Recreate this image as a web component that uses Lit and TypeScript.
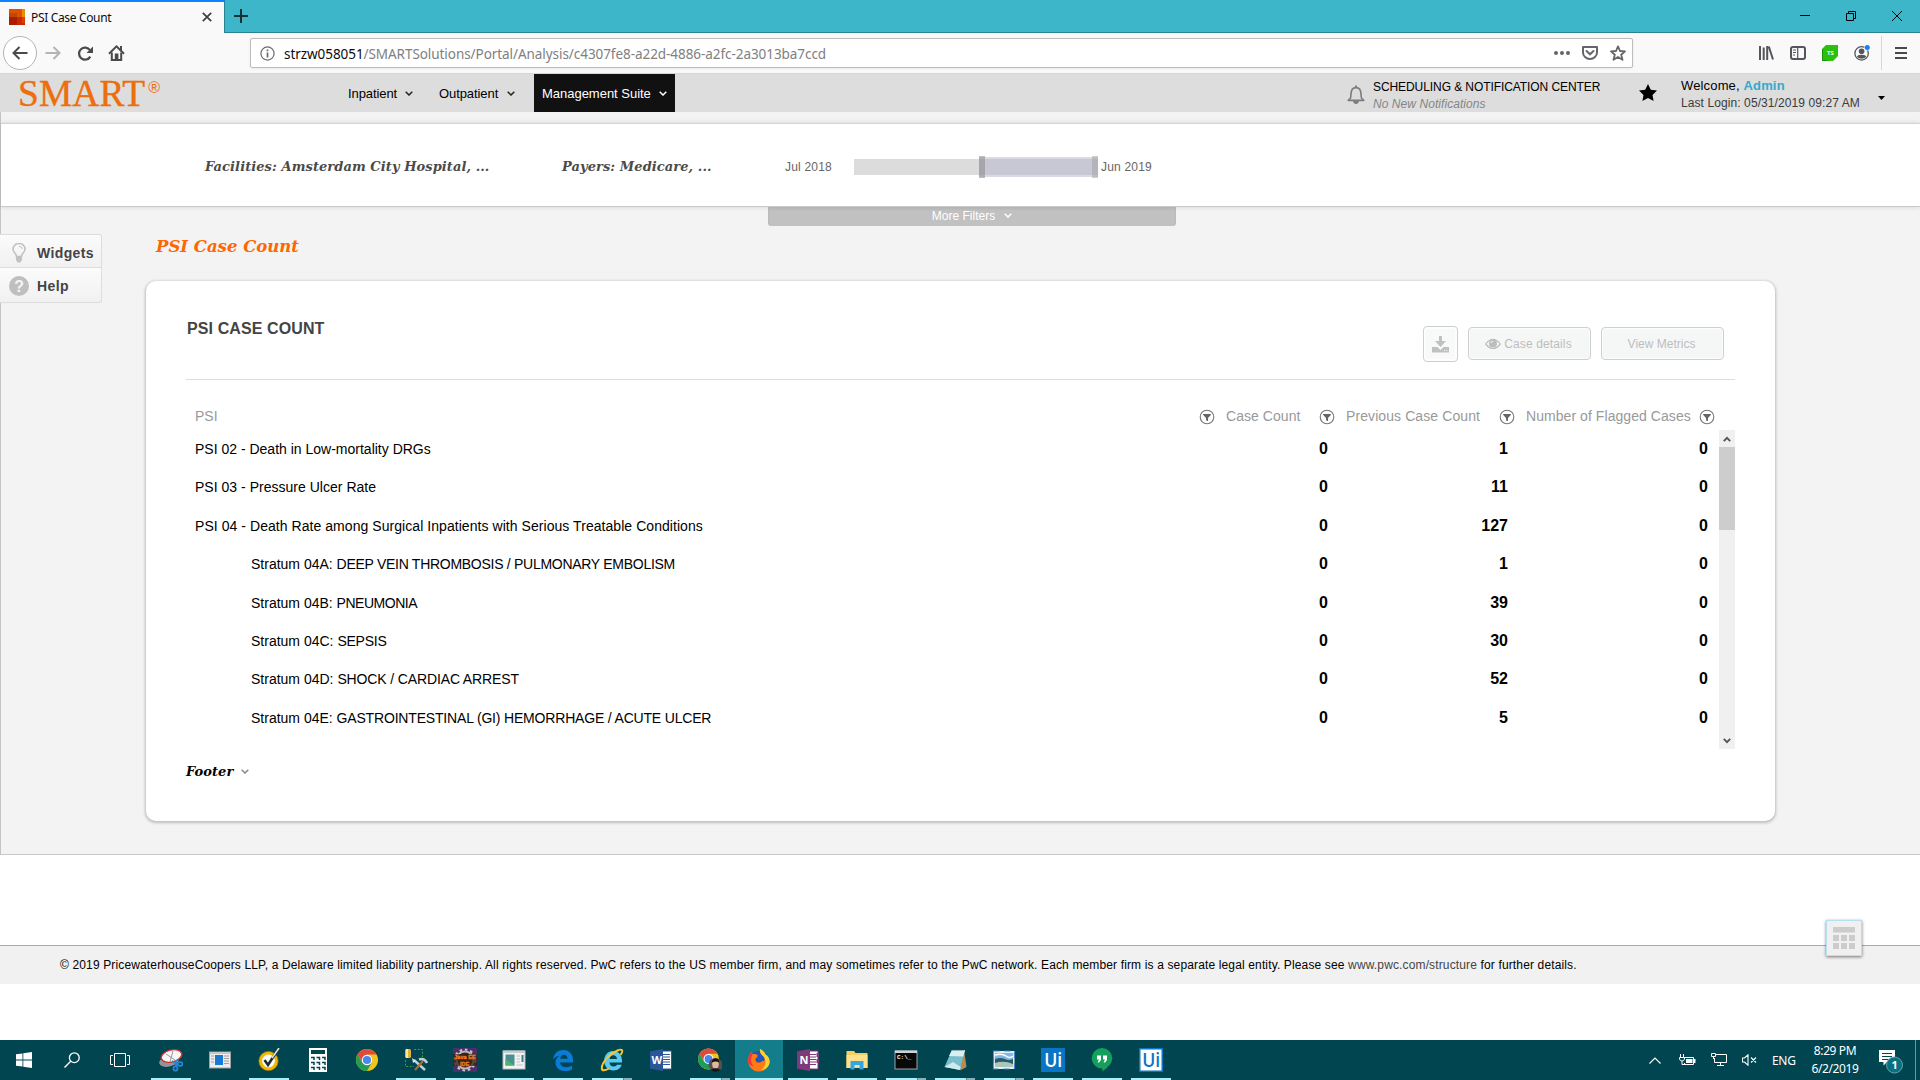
import { LitElement, html, css, svg } from "lit";
import { customElement } from "lit/decorators.js";
import { classMap } from "lit/directives/class-map.js";

const icon = (w: number, h: number, body: unknown) =>
  html`<svg class="ic" width=${w} height=${h} viewBox="0 0 ${w} ${h}">${body}</svg>`;

const chevron = (color: string, w = 8, h = 5) => html`<svg class="ic" width=${w} height=${h} viewBox="0 0 8 5"
  ><path d="M.7 .7L4 4L7.3 .7" fill="none" stroke=${color} stroke-width="1.5" /></svg>`;

/* ---------- browser chrome ---------- */
@customElement("browser-chrome")
class BrowserChrome extends LitElement {
  static styles = css`
    :host { display: block; font-family: "Noto Sans", "Open Sans", sans-serif; }
    .ic { display: block; flex: none; }
    .tabs { display: flex; height: 33px; background: #3cb6c8; box-shadow: inset 0 -1px #2b8390; }
    .tab { display: flex; align-items: center; box-sizing: border-box; width: 225px; height: 33px; padding: 0 12px 0 9px;
      background: #f9f9fa; border-top: 2px solid #0a84ff; border-right: 1px solid #2b8390; }
    .tab .label { margin-left: 6px; margin-top: -1px; flex: 1; font-size: 12px; letter-spacing: -0.34px; color: #0c0c0d; white-space: nowrap; }
    .tab .ic { margin-top: -2px; }
    .plus { margin: 9px 0 0 9px; }
    .win { display: flex; margin: 11px 18px 0 auto; gap: 36px; }
    .nav { display: flex; align-items: center; height: 40px; background: #f9f9fa; }
    .back { display: flex; align-items: center; justify-content: center; box-sizing: border-box; width: 34px; height: 34px;
      margin-left: 3px; border: 1px solid #b4b4b5; border-radius: 50%; background: #fff; }
    .fwd { margin-left: 8px; }
    .reload { margin-left: 17px; }
    .home { margin-left: 15px; }
    .url { display: flex; align-items: center; box-sizing: border-box; width: 1383px; height: 30px; margin-left: 125px;
      padding: 0 6px 0 9px; background: #fff; border: 1px solid #bcbcbd; border-radius: 2px; box-shadow: 0 1px 3px rgba(0,0,0,.06); }
    .addr { margin-left: 9px; margin-top: 2px; flex: 1; font-size: 13.5px; letter-spacing: -0.06px; color: #808080; white-space: nowrap; }
    .host { color: #0c0c0d; }
    .acts { display: flex; gap: 12px; align-items: center; }
    .tools { display: flex; align-items: center; margin-left: 125px; gap: 16px; }
    .sep { width: 1px; height: 34px; background: #d7d7db; margin-left: -5px; margin-right: -3px; }
    .ts { font: bold 6px "Noto Sans", sans-serif; }
  `;
  render() {
    return html`
      <div class="tabs">
        <div class="tab">
          ${icon(16, 16, svg`<rect width="16" height="16" fill="#c52a00"/><rect width="13" height="8" fill="#dc5204"/><rect x="13" width="3" height="8" fill="#eb8c00"/><rect y="4" width="8" height="4" fill="#c34600"/><rect y="8" width="8" height="8" fill="#a91d00"/><rect x="13" y="8" width="3" height="6" fill="#da3c00"/>`)}
          <span class="label">PSI Case Count</span>
          ${icon(10, 10, svg`<path d="M.8 .8L9.2 9.2M9.2 .8L.8 9.2" stroke="#3f3f43" stroke-width="1.7"/>`)}
        </div>
        <div class="plus">${icon(14, 14, svg`<path d="M7 0V14M0 7H14" stroke="#163036" stroke-width="2"/>`)}</div>
        <div class="win">
          ${icon(10, 10, svg`<path d="M0 4.5H10" stroke="#000"/>`)}
          ${icon(10, 10, svg`<path d="M.5 2.5H7.5V9.5H.5ZM2.5 2.5V.5H9.5V7.5H7.5" fill="none" stroke="#000"/>`)}
          ${icon(10, 10, svg`<path d="M0 0L10 10M10 0L0 10" stroke="#000"/>`)}
        </div>
      </div>
      <div class="nav">
        <div class="back">${icon(16, 14, svg`<path d="M15.5 7H1.5M7.5 1L1.5 7L7.5 13" fill="none" stroke="#4a4a4d" stroke-width="2"/>`)}</div>
        <div class="fwd">${icon(16, 14, svg`<path d="M.5 7H14.5M8.5 1L14.5 7L8.5 13" fill="none" stroke="#b4b4b6" stroke-width="2"/>`)}</div>
        <div class="reload">${icon(15, 15, svg`<path d="M12.3 10.6A6 6 0 1 1 12 4.2" fill="none" stroke="#4a4a4d" stroke-width="2.2"/><path d="M15 .5V7H8.5Z" fill="#4a4a4d"/>`)}</div>
        <div class="home">${icon(17, 16, svg`<path d="M1 8.8L8.5 1.4L16 8.8" fill="none" stroke="#4a4a4d" stroke-width="2"/><path d="M3.8 7.500V15H13.2V7.500" fill="none" stroke="#4a4a4d" stroke-width="2"/><rect x="6.800" y="8.500" width="3.600" height="7.500" fill="#4a4a4d"/><rect x="12" y="1" width="2" height="4" fill="#4a4a4d"/>`)}</div>
        <div class="url">
          ${icon(15, 15, svg`<circle cx="7.5" cy="7.5" r="6.6" fill="none" stroke="#6b6b6e" stroke-width="1.2"/><path d="M7.5 6.4V11.4M7.5 3.4V5.2" stroke="#6b6b6e" stroke-width="1.7"/>`)}
          <span class="addr"><span class="host">strzw058051</span>/SMARTSolutions/Portal/Analysis/c4307fe8-a22d-4886-a2fc-2a3013ba7ccd</span>
          <div class="acts">
            ${icon(16, 16, svg`<g fill="#66666a"><circle cx="2" cy="8" r="2"/><circle cx="8" cy="8" r="2"/><circle cx="14" cy="8" r="2"/></g>`)}
            ${icon(16, 16, svg`<path d="M1 2H15V7.5A7 6.5 0 0 1 1 7.5Z" fill="none" stroke="#66666a" stroke-width="2" stroke-linejoin="round"/><path d="M4.5 6L8 9.3L11.5 6" fill="none" stroke="#66666a" stroke-width="2" stroke-linecap="round"/>`)}
            ${icon(16, 16, svg`<path d="M8 1.4L10 6L15 6.4L11.2 9.7L12.5 14.8L8 12L3.5 14.8L4.8 9.7L1 6.4L6 6Z" fill="none" stroke="#66666a" stroke-width="1.8" stroke-linejoin="round"/>`)}
          </div>
        </div>
        <div class="tools">
          ${icon(16, 16, svg`<path d="M2 1V15M5.7 2.5V15M9.2 1V15M10.8 1.5L15 14.5" fill="none" stroke="#56565a" stroke-width="2"/>`)}
          ${icon(16, 16, svg`<rect x="1" y="2" width="14" height="12" rx="2" fill="none" stroke="#56565a" stroke-width="2"/><path d="M7.7 2V14M3 5H6M3 7.5H6M3 10H5" stroke="#56565a" stroke-width="1.2"/>`)}
          ${icon(16, 16, svg`<path d="M4 0H16V11L11 16H0V4Z" fill="#2bc00b"/><path d="M.5 4V15.5H5" fill="none" stroke="#18910a"/><text class="ts" x="5" y="10.2" fill="#e9ffe4">TS</text>`)}
          ${icon(16, 16, svg`<circle cx="7.6" cy="8.4" r="6.7" fill="none" stroke="#56565a" stroke-width="1.3"/><circle cx="7.6" cy="6.3" r="2.8" fill="#56565a"/><path d="M3 12Q3.5 9.5 7.6 9.7Q11.7 9.5 12.2 12Q7.6 15.5 3 12Z" fill="#56565a"/><circle cx="13.3" cy="2.6" r="3" fill="#f9f9fa"/><circle cx="13.3" cy="2.5" r="2.5" fill="#0a84ff"/>`)}
          <div class="sep"></div>
          ${icon(12, 14, svg`<path d="M0 2H12M0 7H12M0 12H12" stroke="#4a4a4d" stroke-width="2"/>`)}
        </div>
      </div>`;
  }
}

/* ---------- portal header ---------- */
@customElement("portal-header")
class PortalHeader extends LitElement {
  static styles = css`
    :host { display: flex; height: 39px; background: #ddd; color: #000; font-family: "Liberation Sans", Arial, sans-serif; white-space: nowrap; box-shadow: inset 0 1px #d6d6d6; }
    .ic { display: block; flex: none; }
    .logo { display: flex; width: 317px; padding-left: 18px; color: #eb6f0d; -webkit-text-stroke: .4px #eb6f0d; font: 37.4px/41px "Liberation Serif", "Times New Roman", serif; letter-spacing: .15px; }
    .reg { font: 16px/29px "Liberation Sans", Arial, sans-serif; margin-left: 3px; -webkit-text-stroke: 0; }
    .menu { display: flex; align-items: center; box-sizing: border-box; gap: 8px; height: 38px; margin-top: 1px; padding-left: 8px; font-size: 13px; letter-spacing: -0.08px; }
    .m1 { width: 91px; margin-left: 5px; padding-left: 8px; }
    .m2 { width: 103px; }
    .m2 .ic { margin-left: 1px; }
    .m3 { width: 141px; background: #111; color: #fff; letter-spacing: -0.02px; }
    .bell { margin: 12px 0 0 672px; }
    .note { width: 266px; padding: 6px 0 0 8px; font-size: 12px; line-height: 17px; letter-spacing: -0.08px; }
    .sub { font-style: italic; color: #858585; letter-spacing: 0.06px; }
    .star { padding-top: 11px; width: 42px; }
    .who { font-size: 13px; line-height: 17px; padding-top: 4px; width: 197px; letter-spacing: .15px; }
    .name { font-weight: bold; color: #35a9cc; }
    .last { font-size: 12px; color: #3b3b3b; letter-spacing: 0.09px; margin-top: 1px; }
    .caret { padding-top: 23px; }
  `;
  render() {
    return html`
      <div class="logo">SMART<span class="reg">®</span></div>
      <div class="menu m1">Inpatient ${chevron("#222")}</div>
      <div class="menu m2">Outpatient ${chevron("#222")}</div>
      <div class="menu m3">Management Suite ${chevron("#fff")}</div>
      <div class="bell">${icon(18, 20, svg`<path d="M3.6 13C4.3 8 3.5 2.6 9 2.6S13.7 8 14.4 13L16.8 15.4H1.2Z" fill="none" stroke="#7d7d7d" stroke-width="1.6" stroke-linejoin="round"/><path d="M9 .5V2.5" stroke="#7d7d7d" stroke-width="2"/><path d="M6 16H12Q11.5 19 9 19T6 16" fill="#7d7d7d"/>`)}</div>
      <div class="note"><div>SCHEDULING &amp; NOTIFICATION CENTER</div><div class="sub">No New Notifications</div></div>
      <div class="star">${icon(18, 17, svg`<path d="M9 0L11.8 5.7L18 6.5L13.5 10.9L14.6 17L9 14L3.4 17L4.5 10.9L0 6.5L6.2 5.7Z" fill="#000"/>`)}</div>
      <div class="who"><div>Welcome, <span class="name">Admin</span></div><div class="last">Last Login: 05/31/2019 09:27 AM</div></div>
      <div class="caret">${icon(7, 4, svg`<path d="M0 0H7L3.5 4Z" fill="#000"/>`)}</div>`;
  }
}

/* ---------- filter bar ---------- */
@customElement("filter-bar")
class FilterBar extends LitElement {
  static styles = css`
    :host { display: block; font-family: "Liberation Sans", Arial, sans-serif; white-space: nowrap; }
    .ic { display: block; }
    .bar { display: flex; align-items: center; box-sizing: border-box; height: 84px; padding: 3px 0 0 204px; background: #fff;
      border-top: 1px solid #d3d3d3; border-bottom: 1px solid #c9c9c9; box-shadow: 0 0 5px rgba(0,0,0,.13); }
    .f { font: italic bold 13px "DejaVu Serif", serif; color: #4a4a4a; letter-spacing: 0.08px; margin-top: -1px; }
    .f1 { width: 357px; }
    .f2 { width: 223px; }
    .d { font-size: 12px; color: #666; letter-spacing: 0.2px; }
    .d1 { width: 69px; }
    .track { position: relative; width: 244px; height: 16px; background: #dcdcdc; margin-right: 3px; }
    .sel { position: absolute; left: 125px; top: -2px; width: 119px; height: 20px; background: rgba(176,176,204,.45); }
    .h { position: absolute; top: -3px; width: 6px; height: 22px; background: rgba(130,130,130,.5); }
    .h1 { left: 125px; } .h2 { left: 238px; background: rgba(160,160,160,.5); }
    .more { display: flex; align-items: center; justify-content: center; gap: 9px; box-sizing: border-box; width: 408px; height: 19px; padding-bottom: 2px; margin-left: 767px; background: #c1c1c1;
      border-radius: 0 0 3px 3px; color: #fff; font-size: 12px; letter-spacing: 0.02px; box-shadow: inset 0 2px 3px rgba(0,0,0,.08); }
  `;
  render() {
    return html`
      <div class="bar">
        <div class="f f1">Facilities: Amsterdam City Hospital, ...</div>
        <div class="f f2">Payers: Medicare, ...</div>
        <div class="d d1">Jul 2018</div>
        <div class="track"><div class="sel"></div><div class="h h1"></div><div class="h h2"></div></div>
        <div class="d">Jun 2019</div>
      </div>
      <div class="more">More Filters ${chevron("#fff")}</div>`;
  }
}

/* ---------- case count card ---------- */
/* The last field is the tracking, in pixels, of the label (of a stratum's name, in nested rows). */
type Row = [code: string, name: string, nested: boolean, values: number[], tracking: number];
const ROWS: Row[] = [
  ["", "PSI 02 - Death in Low-mortality DRGs", false, [0, 1, 0], 0],
  ["", "PSI 03 - Pressure Ulcer Rate", false, [0, 11, 0], 0.02],
  ["", "PSI 04 - Death Rate among Surgical Inpatients with Serious Treatable Conditions", false, [0, 127, 0], 0.055],
  ["Stratum 04A: ", "DEEP VEIN THROMBOSIS / PULMONARY EMBOLISM", true, [0, 1, 0], -0.28],
  ["Stratum 04B: ", "PNEUMONIA", true, [0, 39, 0], -0.48],
  ["Stratum 04C: ", "SEPSIS", true, [0, 30, 0], -0.22],
  ["Stratum 04D: ", "SHOCK / CARDIAC ARREST", true, [0, 52, 0], -0.13],
  ["Stratum 04E: ", "GASTROINTESTINAL (GI) HEMORRHAGE / ACUTE ULCER", true, [0, 5, 0], -0.18],
];

@customElement("case-card")
class CaseCard extends LitElement {
  static styles = css`
    :host { display: block; box-sizing: border-box; width: 1629px; height: 540px; padding: 0 40px; background: #fff; border-radius: 10px;
      box-shadow: 0 1px 3px 1px rgba(0,0,0,.22); font-family: "Liberation Sans", Arial, sans-serif; white-space: nowrap; color: #000; }
    .ic { display: block; flex: none; }
    .head { display: flex; box-sizing: border-box; height: 99px; border-bottom: 1px solid #ddd; }
    .title { flex: 1; padding: 38px 0 0 1px; font-size: 16px; line-height: 20px; font-weight: bold; color: #444; letter-spacing: 0.1px; }
    .btn { display: flex; align-items: center; justify-content: center; gap: 3px; box-sizing: border-box; width: 123px; height: 33px; margin: 46px 10px 0 0; padding-right: 2px;
      background: #f5f7f6; border: 1px solid #ccd0cf; border-radius: 4px; color: #bdbdbd; font-size: 12px; box-shadow: inset 0 0 0 1px #fbfcfc; letter-spacing: .13px; }
    .dl { width: 35px; height: 36px; margin-top: 45px; padding-right: 0; background: #f8f9f9; box-shadow: inset 0 0 0 2px #fdfdfd; }
    .last { margin-right: 11px; letter-spacing: 0; }
    .cols { display: flex; align-items: center; height: 50px; padding: 22px 0 0 9px; box-sizing: border-box; font-size: 14px; color: #999; }
    .cols .ic { margin-top: 2px; }
    .c0 { width: 1004px; } .c1 { width: 93px; margin-left: 11px; letter-spacing: .05px; } .c2 { width: 153px; margin-left: 11px; letter-spacing: .09px; } .c3 { width: 173px; margin-left: 11px; letter-spacing: .06px; }
    .body { display: flex; height: 319px; }
    .rows { flex: 1; }
    .row { display: grid; grid-template-columns: 942px 200px 180px 200px; height: 38.4px; line-height: 38.4px; font-size: 14px; }
    .lab { padding-left: 9px; white-space: pre; }
    .nested { padding-left: 65px; }
    .v { text-align: right; font-size: 16px; font-weight: bold; }
    .sb { display: flex; flex-direction: column; align-items: center; width: 16px; background: #f0f0f0; }
    .a { display: flex; align-items: center; height: 17px; }
    .thumb { width: 16px; height: 83px; background: #cdcdcd; margin-bottom: auto; }
    .foot { display: flex; align-items: center; gap: 8px; margin-top: 12px; height: 20px; font: italic bold 13px "DejaVu Serif", serif; letter-spacing: 0.05px; }
  `;
  filter = () => icon(16, 16, svg`<circle cx="8" cy="8" r="6.8" fill="none" stroke="#777" stroke-width="1.1"/><path d="M4.2 5H11.8V6L9 9V12.2L7 11.2V9L4.2 6Z" fill="#666"/>`);
  render() {
    return html`
      <div class="head">
        <div class="title">PSI CASE COUNT</div>
        <div class="btn dl">${icon(17, 17, svg`<path d="M7 0H10V5H14L8.5 11L3 5H7Z" fill="#c0c0c0"/><path d="M0 11H5.5L8.5 14L11.5 11H17V16.5H0Z" fill="#c0c0c0"/><path d="M12 14.3H13M14.3 14.3H15.3" stroke="#fff"/>`)}</div>
        <div class="btn">${icon(16, 12, svg`<path d="M.6 6Q8-3.4 15.4 6Q8 15 .6 6Z" fill="none" stroke="#bdbdbd" stroke-width="1.2"/><circle cx="8" cy="5.5" r="4" fill="#bdbdbd"/><path d="M6 5Q6.3 3.4 8 3.2" fill="none" stroke="#f5f7f6"/>`)}<span>Case details</span></div>
        <div class="btn last">View Metrics</div>
      </div>
      <div class="cols">
        <span class="c0">PSI</span>${this.filter()}
        <span class="c1">Case Count</span>
        ${this.filter()}
        <span class="c2">Previous Case Count</span>
        ${this.filter()}
        <span class="c3">Number of Flagged Cases</span>${this.filter()}
      </div>
      <div class="body">
        <div class="rows">
          ${ROWS.map(([code, name, nested, values, tracking]) => html`<div class="row">
            <span class=${classMap({ lab: true, nested })}>${code}<span style="letter-spacing:${tracking}px">${name}</span></span>${values.map((v) => html`<span class="v">${v}</span>`)}
          </div>`)}
        </div>
        <div class="sb">
          <div class="a">${icon(8, 6, svg`<path d="M.8 5.2L4 1.8L7.2 5.2" fill="none" stroke="#555" stroke-width="1.9"/>`)}</div>
          <div class="thumb"></div>
          <div class="a">${icon(8, 6, svg`<path d="M.8 .8L4 4.2L7.2 .8" fill="none" stroke="#555" stroke-width="1.9"/>`)}</div>
        </div>
      </div>
      <div class="foot">Footer ${chevron("#888")}</div>`;
  }
}

/* ---------- taskbar ---------- */
const chromeMark = (r = 11) => svg`<g transform="translate(12 12) scale(${r / 11})"><circle r="11" fill="#f2c31b"/><path d="M-9.5-5.5A11 11 0 0 1 9.5-5.5H0L-4.5 2.6Z" fill="#dd4b3e"/><path d="M-9.5-5.5A11 11 0 0 0 0 11L4.7 2.7L-4.7 2.7Z" fill="#1f9d58"/><circle r="5.2" fill="#fff"/><circle r="4.1" fill="#4a86ee"/></g>`;

type Task = { art: unknown; open?: boolean; group?: boolean; active?: boolean };
const TASKS: Task[] = [
  { open: true, art: svg`<ellipse cx="10" cy="13" rx="10" ry="5.5" transform="rotate(-14 10 13)" fill="#8d9699"/><ellipse cx="12.5" cy="8" rx="10.5" ry="6" transform="rotate(-14 12.5 8)" fill="#f7f7f7" stroke="#d22f2f" stroke-width="1.4"/><path d="M7 6L16 12M14 3L11 14" stroke="#999" stroke-width="1"/><g fill="none" stroke="#2387d4" stroke-width="1.8"><ellipse cx="21" cy="16" rx="2.4" ry="1.800"/><ellipse cx="16.500" cy="20.500" rx="2" ry="2.200"/><path d="M13 13L19 17M17 12L17 19"/></g>` },
  { art: svg`<rect x="1.5" y="4" width="21" height="16" fill="#ececec" stroke="#9aa3a5" stroke-width="1"/><rect x="7" y="7" width="8" height="10" fill="#1979d6"/><path d="M3 8H6M3 11H6M3 14H6M16 8H21M16 10.5H21M16 13H21M16 15.5H21" stroke="#9d9d9d"/><rect x="2" y="4" width="20" height="2" fill="#c4c8c9"/>` },
  { open: true, art: svg`<circle cx="11.5" cy="13" r="8" fill="#f9fafa" stroke="#f2b705" stroke-width="3.2"/><circle cx="11.5" cy="13" r="9.7" fill="none" stroke="#a97d00" stroke-width=".6"/><path d="M7.5 12L11 17L21 1.5" fill="none" stroke="#1f2a2c" stroke-width="2.6"/><path d="M15 10L22 0" stroke="#dfe6e8" stroke-width="1.6"/>` },
  { art: svg`<rect x="3" width="18" height="24" fill="#fff"/><rect x="5" y="2" width="14" height="4" fill="#00454f"/><path d="M5 9.500H8V12M10.500 9.500H13.500V12M16 9.500H19V12M5 14.500H8V17M10.500 14.500H13.500V17M16 14.500H19V17M5 19.500H8V22M10.500 19.500H13.500V22M16 19.500H19V22" fill="none" stroke="#00454f" stroke-width="1.500"/>` },
  { art: chromeMark() },
  { open: true, art: svg`<path d="M10 1.500H18.500V9M1.500 12V18.500H10" fill="none" stroke="#3aa23a" stroke-width="1" stroke-dasharray="2 1.6"/><rect x="1" y="1" width="6" height="9" rx="1.5" fill="#e2b33a"/><rect x="2" y="1" width="2" height="9" fill="#fbe9a4"/><path d="M10 12L21 22" stroke="#bcd0dd" stroke-width="2.4"/><path d="M19 13L11 22" stroke="#a47034" stroke-width="2.2"/><path d="M15 11.500Q20 9.500 23 15" fill="none" stroke="#c3cfd6" stroke-width="2.600"/><path d="M8 10L12 13L9 15Z" fill="#d9e5ee"/>` },
  { open: true, art: svg`<rect width="24" height="24" fill="#4b2f6b"/><circle cx="12" cy="12" r="8.500" fill="#3a2420" stroke="#b9b9b9" stroke-width="2"/><circle cx="12" cy="12" r="10.400" fill="none" stroke="#c9c9c9" stroke-width="2" stroke-dasharray="2.600 2.800"/><rect y="6" width="24" height="12" fill="#3b2113" opacity=".75"/><text x="1.200" y="11.400" class="jv">Java EE</text><text x="7" y="17.600" class="jv">IDE</text>` },
  { open: true, art: svg`<rect x="1" y="3" width="22" height="18" fill="#f1f2f2" stroke="#b8bcbd"/><rect x="1" y="2.500" width="22" height="2.500" fill="#c8cccd"/><rect x="3.500" y="6.500" width="9" height="11" fill="#4c8f93"/><path d="M3.500 17.500V11L12.500 17.500" fill="#4fb26d"/><path d="M14.500 8H18M14.500 11H18M14.500 14H18M14.500 17H21" stroke="#c2c2c2"/><rect x="19.500" y="7" width="2" height="7" fill="#3d7f88"/>` },
  { open: true, art: svg`<path d="M2 11.500C3 5 7 2 12.500 2C18.500 2 22 6.500 22 12V14.500H9C9.300 17.500 12 19.200 15 19.200C17.300 19.200 19.300 18.600 21 17.600V21.500C19 22.700 16.500 23 14 23C8.500 23 4.500 19.500 4.500 14.500C4.500 11.500 6 9 8.500 7.700C5.500 8 3.500 9.500 2 11.500ZM9.200 10.800H16.500C16.500 8.500 15.200 6.800 13 6.800C10.800 6.800 9.500 8.700 9.200 10.800Z" fill="#0a7bd8"/>` },
  { open: true, group: true, art: svg`<path fill-rule="evenodd" d="M13 3C18.500 3 22 7 22 12.800V14.500H9.500C9.800 17 11.200 18.500 13.500 18.500C15.500 18.500 16.600 17.600 17 16.800H21.700C20.500 20.500 17.500 22.500 13.300 22.500C8 22.500 4.200 18.500 4.200 12.800S8 3 13 3ZM9.600 10.900H17C16.700 8.600 15.500 7.300 13.300 7.300S9.900 8.600 9.600 10.900Z" fill="#5cc9f3"/><path d="M20.500 7C24 2 22 .5 17.500 2.500C10 5.500 2 14 1.800 20C1.700 23 4.500 23 9 20.500" fill="none" stroke="#f6c72b" stroke-width="2"/>` },
  { art: svg`<rect x="12" y="3" width="10.500" height="18" fill="#fff" stroke="#2b579a"/><path d="M14 6.500H21M14 9H21M14 11.500H21M14 14H21M14 16.500H21" stroke="#2b579a" stroke-width="1.100"/><path d="M1 3.200L14 1V23L1 20.800Z" fill="#2b579a"/><text x="2.600" y="16" class="of">W</text>` },
  { open: true, group: true, art: svg`<g transform="translate(-1.500 -1)">${chromeMark(10.500)}</g><circle cx="17.500" cy="17" r="7" fill="#55504e"/><ellipse cx="17.500" cy="16.200" rx="3.300" ry="4.200" fill="#e3b79c"/><path d="M13.800 14.500Q14 10.500 17.500 10.500T21.200 14.500Q18 12.500 13.800 14.500Z" fill="#15110f"/><path d="M12.500 22Q17.500 18.500 22.500 22Q17.500 26 12.500 22Z" fill="#181818"/>` },
  { open: true, active: true, art: svg`<circle cx="12" cy="13" r="10" fill="#2257b8"/><path d="M13 1C17 3 18 5 18.500 6.500C21.500 8 23 11.500 22.500 15A10.800 10.800 0 0 1 1.200 14C1 10 2 6 4.500 3.500C4.500 5 5 5.500 6 6C7.500 5.700 9.500 6 10.500 7C11 8.500 10 9.500 8.500 10.500C8 13.500 10 14.500 12 14.500C15 14.500 14 12.500 17 13C18.500 11 17 8 14.500 6C13 4.500 12.700 3 13 1Z" fill="#ff7a14"/><path d="M13 1C17 3 18 5 18.500 6.500C21.500 8 23 11.500 22.500 15C21.500 19.500 17.500 22 14 22C19 19 20 12 16 8C13.500 6 12.500 3.500 13 1Z" fill="#ffd22e"/><path d="M1.200 14C1 10 2 6 4.500 3.500C4.500 5 5 5.500 6 6C3.500 9 3.500 15 6.500 18.500C4 18 2 16.500 1.200 14Z" fill="#f5333f"/>` },
  { open: true, art: svg`<rect x="12" y="3" width="10" height="18" fill="#fff" stroke="#80397b"/><path d="M14 6.500H20M14 9H20M14 11.500H20M14 14H20M14 16.500H20" stroke="#80397b" stroke-width="1.100"/><path d="M20.500 5H23V9H20.500M20.500 11H23V15H20.500" fill="#80397b"/><path d="M1 3.200L14 1V23L1 20.800Z" fill="#80397b"/><text x="3.500" y="16.200" class="of">N</text>` },
  { open: true, art: svg`<path d="M1.500 3H9L10.500 5H22.500V20H1.500Z" fill="#f6cf62"/><rect x="1.500" y="7" width="21" height="13" fill="#fde08a"/><path d="M5.500 21.500V13H18.500V21.500H14.500V17H9.500V21.500Z" fill="#35a6e4"/>` },
  { open: true, group: true, art: svg`<rect x="1" y="3" width="22" height="18" fill="#080808" stroke="#9ba5a8"/><rect x="1" y="2.500" width="22" height="2.500" fill="#cdd3d5"/><text x="3" y="11" class="cmd">C:\\_</text>` },
  { open: true, group: true, art: svg`<path d="M21 2L23.500 19L17 22.500Z" fill="#b98b52"/><path d="M9 2H22L17 22L1.500 19Z" fill="#79bfcb"/><path d="M9 2H22L20.300 8.500L6 8Z" fill="#d7f0f3"/><path d="M1.500 19L17 22L17.800 19L10 14Z" fill="#cdeaee"/><path d="M9.500 2.300H21.500" stroke="#5d6b6e" stroke-width="1.300" stroke-dasharray="1 1"/>` },
  { open: true, group: true, art: svg`<rect x="1.500" y="3" width="21" height="18" fill="#e9eef2" stroke="#3f86cf" stroke-width="1.200" stroke-dasharray="6 5"/><rect x="3" y="5" width="18" height="14" fill="#7db9e8"/><path d="M3 11Q9 9 13 11T21 11V19H3Z" fill="#2e5966"/><path d="M3 15Q12 12 21 16V19H3Z" fill="#a9c9b9"/><path d="M3 7Q10 5 14 8T21 8" fill="none" stroke="#fff" stroke-width="1.500"/>` },
  { open: true, art: svg`<rect width="24" height="24" fill="#0975c4"/><text x="3.200" y="19" textLength="18" lengthAdjust="spacingAndGlyphs" class="ui w">Ui</text>` },
  { open: true, art: svg`<circle cx="12" cy="10.300" r="10.300" fill="#149f5c"/><path d="M12 19H18L12.500 23.500Z" fill="#149f5c"/><path d="M7 7.500H11V12L9 14.500H7.500L9 11.500H7ZM13 7.500H17V12L15 14.500H13.500L15 11.500H13Z" fill="#fff"/>` },
  { open: true, art: svg`<rect x=".75" y=".75" width="22.500" height="22.500" fill="#fff" stroke="#0975c4" stroke-width="1.500"/><text x="3.200" y="19" textLength="18" lengthAdjust="spacingAndGlyphs" class="ui b">Ui</text>` },
];

@customElement("task-bar")
class TaskBar extends LitElement {
  static styles = css`
    :host { display: flex; height: 40px; background: #00454f; color: #fff; font-family: "Noto Sans", "Open Sans", sans-serif; font-size: 12px; }
    .ic { display: block; flex: none; }
    .sys { display: flex; align-items: center; justify-content: center; width: 48px; }
    .items { display: flex; gap: 1px; margin-left: 3px; flex: 1; }
    .item { display: flex; flex-direction: column; align-items: center; width: 48px; padding-top: 8px; box-sizing: border-box; }
    .active { background: #147d8b; }
    .line { width: 40px; height: 2px; margin-top: auto; background: #a8eff8; }
    .group .line { background: linear-gradient(90deg, #a8eff8 31px, #5e8288 31px, #5e8288 32px, #83b3bb 32px); }
    .active .line { width: 48px; }
    .jv { font: bold 5.6px "Liberation Sans", sans-serif; fill: #ef7a1c; stroke: #ef7a1c; stroke-width: .3px; }
    .of { font: bold 11px "Noto Sans", sans-serif; fill: #fff; }
    .cmd { font: bold 6px "Liberation Mono", monospace; fill: #fff; }
    .ui { font: 600 19px "Open Sans", "Noto Sans", sans-serif; }
    .w { fill: #fff; } .b { fill: #0975c4; }
    .tray { display: flex; align-items: center; }
    .t2 { margin-left: 18px; } .t3 { margin-left: 15px; } .t4 { margin-left: 15px; }
    .lang { width: 24px; margin-left: 15px; letter-spacing: -0.3px; }
    .clock { width: 60px; margin-left: 9px; text-align: center; line-height: 18px; letter-spacing: -0.4px; margin-top: -1px; white-space: nowrap; }
    .act { margin: 5px 11px 0 14px; }
    .edge { width: 4px; height: 40px; border-left: 1px solid #6d979d; }
    .n { font: bold 11px "Noto Sans", sans-serif; fill: #fff; }
  `;
  render() {
    return html`
      <div class="sys">${icon(16, 16, svg`<path d="M0 2.300L6.500 1.400V7.600H0ZM7.300 1.300L16 0V7.600H7.300ZM0 8.400H6.500V14.600L0 13.700ZM7.300 8.400H16V16L7.300 14.700Z" fill="#fff"/>`)}</div>
      <div class="sys">${icon(16, 16, svg`<circle cx="10.300" cy="5.700" r="4.900" fill="none" stroke="#fff" stroke-width="1.300"/><path d="M6.700 9.300L.5 15.500" stroke="#fff" stroke-width="1.400"/>`)}</div>
      <div class="sys">${icon(20, 14, svg`<path d="M4.500 .5H15.500V13.500H4.500ZM3 2.500H.5V11.500H3M17 2.500H19.500V11.500H17" fill="none" stroke="#fff"/>`)}</div>
      <div class="items">
        ${TASKS.map((t) => html`<div class=${classMap({ item: true, active: !!t.active, group: !!t.group })}>
          ${icon(24, 24, t.art)}${t.open ? html`<div class="line"></div>` : ""}
        </div>`)}
      </div>
      <div class="tray">
        ${icon(12, 7, svg`<path d="M.5 6.500L6 1L11.500 6.500" fill="none" stroke="#fff" stroke-width="1.200"/>`)}
        <div class="t2">${icon(17, 12, svg`<path d="M5.500 3.500H14.500V10.500H5.500V9" fill="none" stroke="#fff"/><rect x="7" y="5" width="6.500" height="4" fill="#fff"/><rect x="15" y="5" width="1.500" height="4" fill="#fff"/><path d="M1.500 0V3M4.500 0V3M.5 3.500H5.500V5Q5 7 3 7T.5 5ZM3 7V10.500H6" fill="none" stroke="#fff"/>`)}</div>
        <div class="t3">${icon(16, 14, svg`<path d="M5 1.500H15.500V9.500H3.500V5M9.500 9.500V12.500M6 12.500H13" fill="none" stroke="#fff"/><path d="M.5 .5H4.500V3.500H.5ZM2.500 3.500V6" fill="none" stroke="#fff"/>`)}</div>
        <div class="t4">${icon(15, 12, svg`<path d="M.5 4H2.500L6 .8V11.200L2.500 8H.5ZM9 3.500L14 8.500M14 3.500L9 8.500" fill="none" stroke="#fff" stroke-width="1.100"/>`)}</div>
        <div class="lang">ENG</div>
        <div class="clock">8:29 PM<br />6/2/2019</div>
        <div class="act">${icon(25, 25, svg`<path d="M0 0H16V12H8L4.500 15.500V12H0Z" fill="#fff"/><path d="M3 3.500H13M3 6.500H13M3 9.500H9" stroke="#00454f"/><circle cx="15.500" cy="15" r="8" fill="#0a6f7e" stroke="#5fa3ad"/><text x="12.400" y="19" class="n">1</text>`)}</div>
        <div class="edge"></div>
      </div>`;
  }
}

/* ---------- page ---------- */
@customElement("app-root")
class AppRoot extends LitElement {
  static styles = css`
    :host { display: flex; flex-direction: column; position: relative; width: 1920px; height: 1080px; overflow: hidden; background: #fff; font-family: "Liberation Sans", Arial, sans-serif; }
    .ic { display: block; flex: none; }
    .page { box-sizing: border-box; height: 743px; background: #f3f3f3; border-left: 1px solid #c4c4c4; border-bottom: 1px solid #c9c9c9; padding-top: 11px; }
    .main { display: flex; }
    .side { width: 146px; margin-left: -1px; padding-top: 8px; }
    .link { display: flex; align-items: center; box-sizing: border-box; width: 102px; height: 34px; padding: 3px 0 0 9px; border: 1px solid #ddd; border-left: 0;
      background: linear-gradient(#fbfbfb, #f1f1f1); border-radius: 0 3px 0 0; font-size: 14px; font-weight: bold; color: #444; letter-spacing: .37px; }
    .link + .link { border-top: 0; border-radius: 0 0 3px 0; height: 35px; padding-top: 2px; }
    .box { display: flex; justify-content: center; width: 20px; margin-right: 8px; }
    .q { font: bold 16px "Liberation Sans", sans-serif; }
    .title { height: 55px; padding: 10px 0 0 10px; box-sizing: border-box; font: italic bold 16.5px/22px "DejaVu Serif", serif; letter-spacing: 0; color: #f60; }
    .content { display: block; }
    .legal { box-sizing: border-box; height: 39px; margin-top: 90px; padding: 3px 0 0 60px; background: #f1f1f1; border-top: 1px solid #aaa; font-size: 12px; line-height: 33px; white-space: nowrap; letter-spacing: .14px; }
    .url { color: #444; }
    .calc { position: absolute; left: 1826px; top: 920px; display: flex; align-items: center; justify-content: center; box-sizing: border-box; width: 36px; height: 36px;
      background: #f0f0f0; border: 1px solid #b4e0f0; box-shadow: 0 1px 3px rgba(0,0,0,.5); }
    task-bar { margin-top: auto; }
  `;
  render() {
    return html`
      <browser-chrome></browser-chrome>
      <portal-header></portal-header>
      <div class="page">
        <filter-bar></filter-bar>
        <div class="main">
          <div class="side">
            <div class="link"><div class="box">${icon(14, 20, svg`<path d="M4.500 13.500C4.500 10.500 1 9.500 1 6A6 5.500 0 0 1 13 6C13 9.500 9.500 10.500 9.500 13.500Z" fill="none" stroke="#c2c2c2" stroke-width="1.600"/><path d="M4 13H10V17L8.500 19.500H5.500L4 17Z" fill="#c2c2c2"/><path d="M7 3.200Q9.800 3.300 10.200 6" fill="none" stroke="#c2c2c2"/>`)}</div>Widgets</div>
            <div class="link"><div class="box">${icon(20, 20, svg`<circle cx="10" cy="10" r="10" fill="#bfbfbf"/><text x="5.200" y="15.600" class="q" fill="#f6f6f6">?</text>`)}</div>Help</div>
          </div>
          <div class="content">
            <div class="title">PSI Case Count</div>
            <case-card></case-card>
          </div>
        </div>
      </div>
      <div class="legal">© 2019 PricewaterhouseCoopers LLP, a Delaware limited liability partnership. All rights reserved. PwC refers to the US member firm, and may sometimes refer to the PwC network. Each member firm is a separate legal entity. Please see <span class="url">www.pwc.com/structure</span> for further details.</div>
      <div class="calc">${icon(22, 22, svg`<path d="M0 0H22V5.500H0ZM0 8H6V14H0ZM8 8H14V14H8ZM16 8H22V14H16ZM0 16H6V22H0ZM8 16H14V22H8ZM16 16H22V22H16Z" fill="#ccc"/>`)}</div>
      <task-bar></task-bar>`;
  }
}
